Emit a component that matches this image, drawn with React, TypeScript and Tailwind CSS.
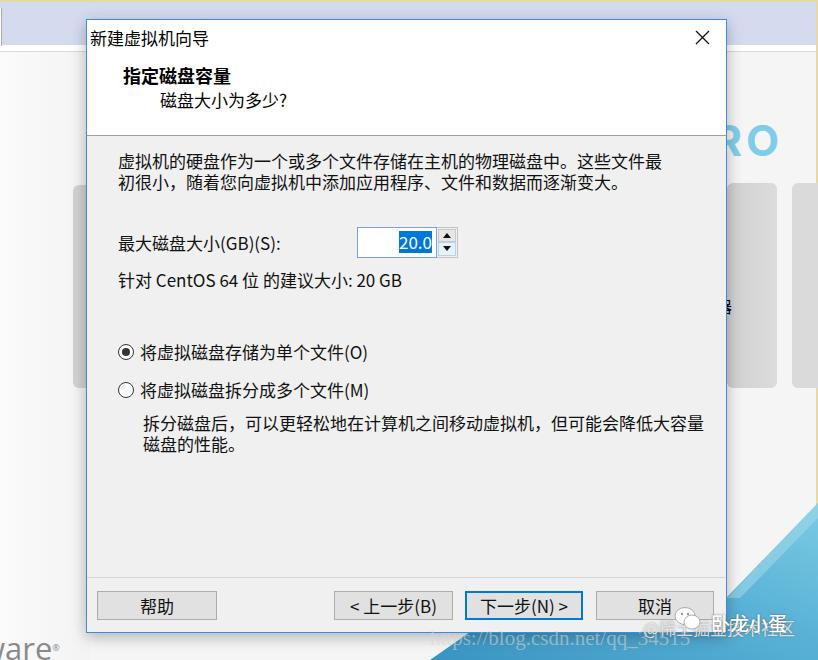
import React from "react";

const cjk = "font-['Noto_Sans_CJK_SC','Noto_Sans',sans-serif]";

function Radio({ checked }: { checked: boolean }) {
  return (
    <span className="flex h-[16px] w-[16px] items-center justify-center rounded-full border border-[#333] bg-white">
      {checked && <span className="h-[8px] w-[8px] rounded-full bg-[#333]" />}
    </span>
  );
}

function Btn({ children, w, primary }: { children: React.ReactNode; w: string; primary?: boolean }) {
  return (
    <div
      className={`flex h-[29px] items-center justify-center bg-[#e1e1e1] text-[17px] leading-[21px] text-[#111] ${w} ${
        primary ? "border-2 border-[#0078d7]" : "border border-[#adadad]"
      }`}
    >
      {children}
    </div>
  );
}

export default function App() {
  return (
    <div className={`relative h-[660px] w-[818px] overflow-hidden bg-[#f5f5f5] ${cjk}`}>
      {/* background app window */}
      <div className="absolute left-0 top-0 h-[2px] w-full bg-[#e6d9a6]" />
      <div className="absolute left-0 top-[2px] h-[43px] w-full bg-[#d4dbef]" />
      <div className="absolute left-0 top-[45px] h-[7px] w-full border-b border-[#d9d9d9] bg-white" />
      <div className="absolute left-[-10px] top-[8px] h-[38px] w-[12px] border-r border-[#a9a9a9] bg-white" />
      <div className="absolute right-0 top-0 h-full w-[2px] bg-[#e6d9a6]" />
      <div className="absolute left-0 top-[52px] h-[608px] w-[90px] bg-gradient-to-r from-[#fbfbfb] to-[#f3f3f3]" />
      <div className="absolute left-[73px] top-[185px] h-[203px] w-[40px] rounded-[6px] bg-[#d2d2d2]" />
      <div className="absolute left-[727px] top-[183px] h-[205px] w-[50px] rounded-[6px] bg-gradient-to-r from-[#cfcfcf] to-[#dcdcdc]" />
      <div className="absolute left-[792px] top-[183px] h-[205px] w-[40px] rounded-[6px] bg-[#dadada]" />
      <div className="absolute left-[682px] top-[117px] font-['Inter',sans-serif] text-[43px] font-bold leading-[46px] tracking-[4px] text-[#80cde8]">
        PRO
      </div>
      <div className="absolute left-[716px] top-[297px] text-[16px] leading-[18px] text-black">器</div>
      <svg className="absolute left-0 top-0" width="818" height="660" viewBox="0 0 818 660">
        <defs>
          <linearGradient id="bl" x1="0" y1="1" x2="1" y2="0">
            <stop offset="0" stopColor="#3a94c2" />
            <stop offset="0.6" stopColor="#5bb4d7" />
            <stop offset="1" stopColor="#7ccae2" />
          </linearGradient>
        </defs>
        <polygon points="430,660 480,625 700,625 818,503 818,660" fill="url(#bl)" />
        <polygon points="727,598 818,503 818,518 740,598" fill="#9fd7e9" opacity="0.6" />
      </svg>
      <div className="absolute left-[-19px] top-[630px] font-['Open_Sans',sans-serif] text-[31px] leading-[36px] text-[#8a8a8a]">
        ware<span className="align-top text-[9px]">®</span>
      </div>

      {/* dialog */}
      <div className="absolute left-[86px] top-[19px] flex h-[614px] w-[641px] flex-col border border-[#3f8bd6] bg-white shadow-[0_4px_14px_rgba(0,0,0,0.28)]">
        <div className="flex h-[35px] shrink-0 items-center justify-between pl-[3px] pr-[16px]">
          <span className="text-[17px] leading-[21px] text-black">新建虚拟机向导</span>
          <svg width="15" height="15" viewBox="0 0 15 15">
            <path d="M1 1 L14 14 M14 1 L1 14" stroke="#111" strokeWidth="1.3" />
          </svg>
        </div>
        <div className="h-[81px] shrink-0 border-b border-[#a0a0a0] pt-[8px]">
          <div className="pl-[36px] text-[18px] font-bold leading-[24px] text-black">指定磁盘容量</div>
          <div className="mt-[2px] pl-[73px] text-[17px] leading-[21px] text-black">磁盘大小为多少?</div>
        </div>
        <div className="flex h-[441px] shrink-0 flex-col bg-[#f0f0f0] pl-[31px] pt-[14px] text-[17px] leading-[21px] text-[#111]">
          <div>虚拟机的硬盘作为一个或多个文件存储在主机的物理磁盘中。这些文件最</div>
          <div>初很小，随着您向虚拟机中添加应用程序、文件和数据而逐渐变大。</div>
          <div className="mt-[35px] flex h-[30px] items-center">
            <span className="w-[239px]">最大磁盘大小(GB)(S):</span>
            <div className="flex h-[31px] w-[80px] items-center justify-end border border-[#7fa3cf] bg-white pr-[4px]">
              <span className="bg-[#0078d7] leading-[22px] text-white">20.0</span>
            </div>
            <div className="flex h-[31px] w-[21px] flex-col border border-l-0 border-[#c4c4c4] bg-[#f0f0f0] p-[1px]">
              <div className="flex flex-1 items-center justify-center border border-[#c9c9c9] bg-[#e6e6e6]">
                <svg width="8" height="5" viewBox="0 0 8 5"><polygon points="0,5 4,0 8,5" fill="#111" /></svg>
              </div>
              <div className="flex flex-1 items-center justify-center border border-[#b9d3ee] bg-[#e5f1fb]">
                <svg width="8" height="5" viewBox="0 0 8 5"><polygon points="0,0 8,0 4,5" fill="#111" /></svg>
              </div>
            </div>
          </div>
          <div className="mt-[12px]">针对 CentOS 64 位 的建议大小: 20 GB</div>
          <div className="mt-[51px] flex items-center gap-[6px]">
            <Radio checked />
            <span>将虚拟磁盘存储为单个文件(O)</span>
          </div>
          <div className="mt-[17px] flex items-center gap-[6px]">
            <Radio checked={false} />
            <span>将虚拟磁盘拆分成多个文件(M)</span>
          </div>
          <div className="ml-[25px] mt-[12px]">
            <div>拆分磁盘后，可以更轻松地在计算机之间移动虚拟机，但可能会降低大容量</div>
            <div>磁盘的性能。</div>
          </div>
        </div>
        <div className="flex flex-1 items-start border-t border-[#d6d6d6] bg-[#f0f0f0] pl-[10px] pr-[12px] pt-[13px]">
          <Btn w="w-[120px]">帮助</Btn>
          <div className="flex-1" />
          <Btn w="w-[119px]">&lt; 上一步(B)</Btn>
          <div className="w-[12px]" />
          <Btn w="w-[118px]" primary>下一步(N) &gt;</Btn>
          <div className="w-[13px]" />
          <Btn w="w-[118px]">取消</Btn>
        </div>
      </div>

      {/* watermarks */}
      <div className="pointer-events-none absolute left-[430px] top-[626px] font-['Liberation_Serif',serif] text-[21px] leading-[24px] text-[rgba(215,215,215,0.55)]">
        https://blog.csdn.net/qq_34515
      </div>
      <div className="pointer-events-none absolute left-[643px] top-[618px] text-[17px] leading-[20px] text-[rgba(235,235,235,0.9)] [text-shadow:0_0_2px_rgba(80,80,80,0.6)]">
        @稀土掘金技术社区
      </div>
      <svg className="pointer-events-none absolute left-[674px] top-[606px]" width="28" height="26" viewBox="0 0 28 26">
        <ellipse cx="11" cy="10" rx="10" ry="8.5" fill="white" stroke="#9a9a9a" strokeWidth="0.8" />
        <ellipse cx="18" cy="16" rx="8" ry="7" fill="white" stroke="#9a9a9a" strokeWidth="0.8" />
        <circle cx="8" cy="8" r="1.2" fill="#9a9a9a" />
        <circle cx="14" cy="8" r="1.2" fill="#9a9a9a" />
      </svg>
      <div className="pointer-events-none absolute left-[711px] top-[612px] text-[19px] font-medium leading-[22px] text-white [text-shadow:0_0_2px_rgba(60,60,60,0.8)]">
        卧龙小蛋
      </div>
    </div>
  );
}
